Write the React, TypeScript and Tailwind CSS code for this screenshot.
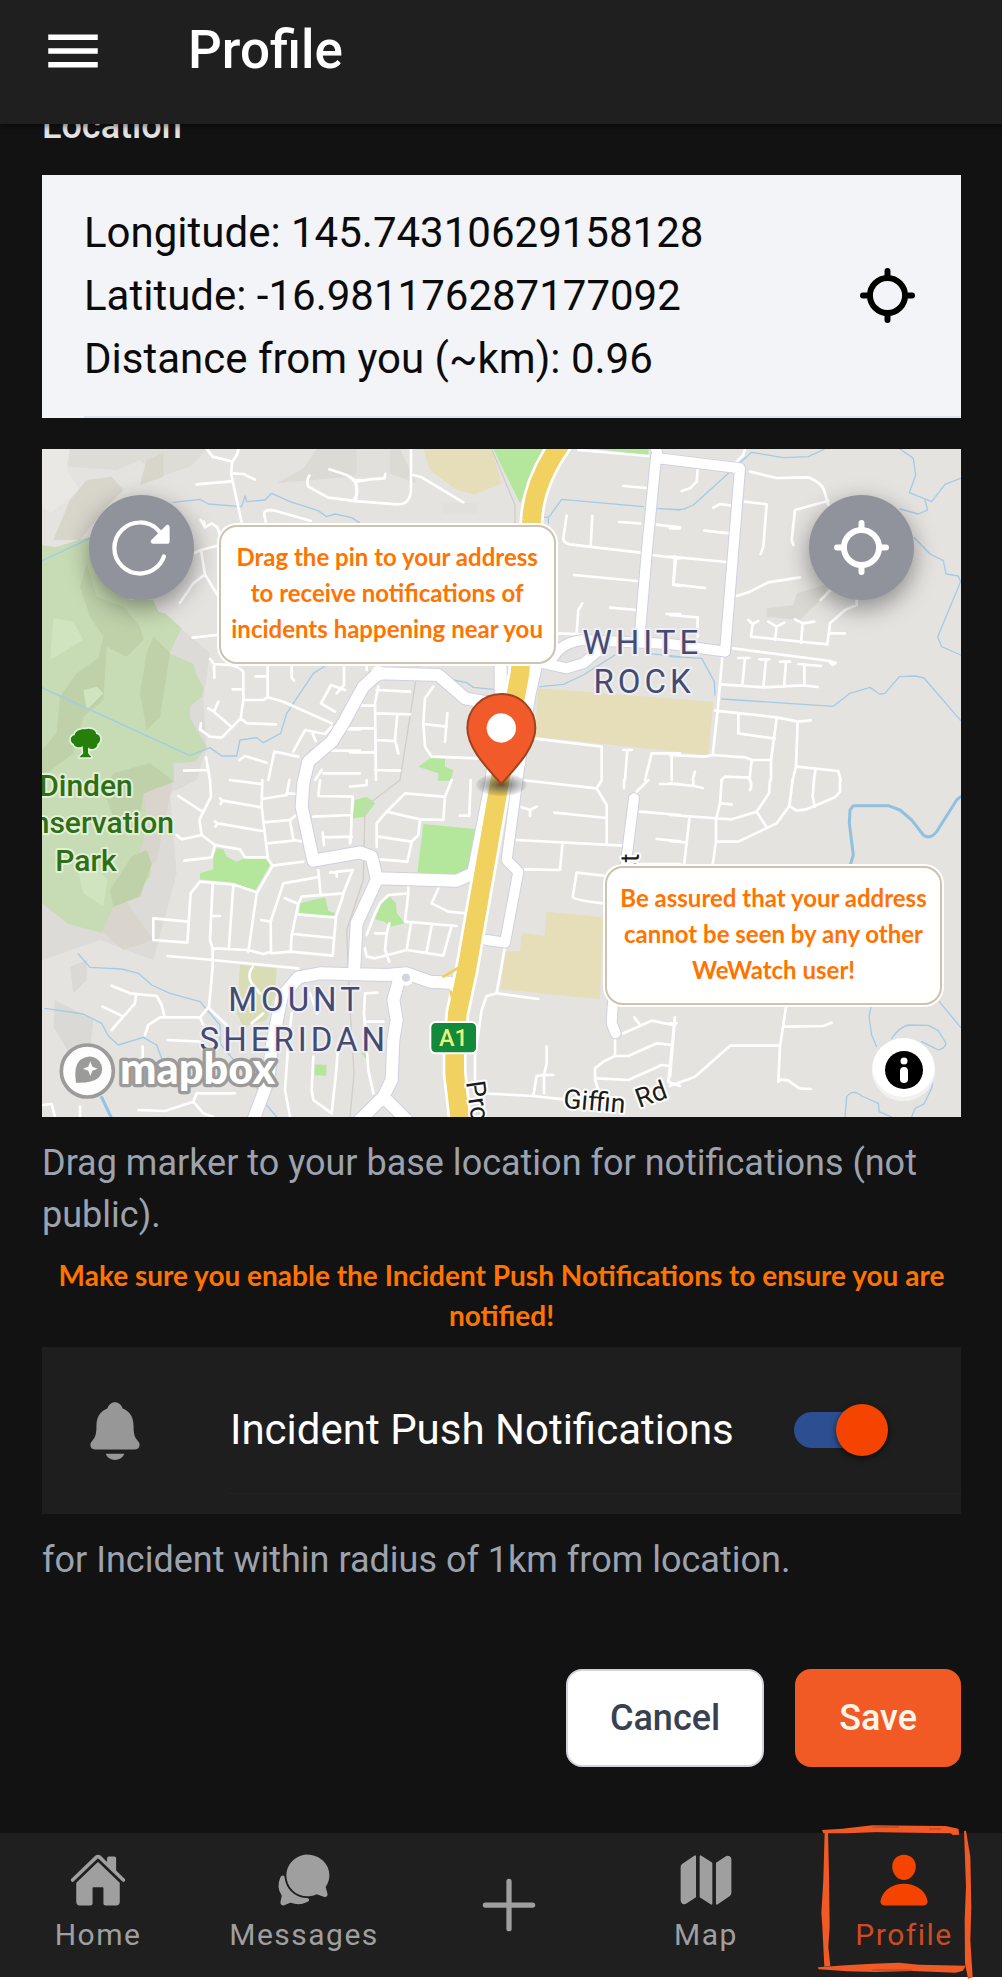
import React, { useState } from "react";
import {
  IoAdd,
  IoChatbubbles,
  IoHome,
  IoMap,
  IoNotifications,
  IoPerson,
  IoReloadOutline,
} from "react-icons/io5";
import { IoMdMenu } from "react-icons/io";

/* Map tiles: each quadrant group draws the streets of one part of the suburb. */

const minor = [
  {
    at: "translate(0 0)",
    d: "M530 27L548 50L607 65M625 27L622 42L607 65L603 100L635 248M603 100L640 102L675 119M500 133L603 124M898 88L950 105L975 122L990 120M838 107Q828 120 835 140L895 173L990 185M975 122L982 150L978 180M843 243L735 212Q700 206 703 225L708 248M512 240L525 262L545 250L562 262L570 285M525 262L522 245M495 338L513 330L570 315M513 330L525 403L562 465M525 403L490 430L450 488M488 593L560 585M540 657L552 672L600 675Q640 685 640 700V780L632 835L575 893L540 890L510 868L513 850M552 672L553 713M608 748H640M640 780H700L713 772L760 785L905 850M713 672V772M677 709H713M785 672V712L792 722M632 835L650 850L738 853M535 805L552 815L605 862M552 815L565 785M942 672V735L920 760M945 750L903 735L873 790L915 815M790 935L825 870L885 882L905 860M848 882L857 903M905 932H990M880 1000H990M930 868H990M628 960L645 948L710 968M715 1020L733 935L805 950M462 992L535 990M528 952L540 1020M855 1020L875 990",
  },
  {
    at: "translate(960 0)",
    d: "M183 27V150Q180 195 140 193L0 182M18 130L0 110M20 125L60 118L103 115L106 102M18 130L20 165L10 182M190 105L215 112L340 187M685 30L895 48M820 138L890 144M650 227L640 295Q640 310 660 313L890 340M727 228L722 320M807 246L870 250M920 254L990 262M672 405L860 423M905 345L990 355M978 355L970 435L990 438M780 503L860 510M950 522H990M697 490L685 510L680 578M620 580L700 583M20 797H75M85 740L75 790L78 1020M80 750L180 755M0 865H75M78 820L180 823M142 823L135 900L145 940M78 900L135 903M0 937H75M75 990L150 992M250 740L225 775L220 850L225 920L245 950L385 955M222 852L290 860M292 820L285 905M550 895L755 920V1020M820 930H845M832 930L825 1020M885 1020L905 940H990M50 690V672",
  },
  {
    at: "translate(1920 0)",
    d: "M225 27L220 45L200 65M83 90L80 125L60 145L35 153M240 95L320 114L415 112Q460 130 465 160L475 195M130 203L150 192L185 197M225 185L290 193L280 320L272 342M475 182L375 210L365 300L370 315M0 265H30M103 272L180 280M0 350L170 366M15 350L10 433L105 444M200 468L240 455L295 427L390 412M0 525L83 532V590M452 480L480 452M235 540L248 552L265 543M248 552L243 590L472 613L480 550L525 510L560 495V480M480 580H525M295 545L320 560L343 548M320 560L315 600M375 538L398 550L433 545M398 550L393 608M190 625L480 663L497 668L488 675L478 665M205 654H238M225 654L217 735M268 658H298M288 660L280 740M330 665H360M348 667L342 740M385 672L453 678M403 674V735M155 733L280 742L400 736L443 741M157 650L143 810L128 945M135 812L320 832L385 845L422 841M205 825V880L315 896M320 835L303 960V1020M383 845L378 980L368 1020M0 945L105 950L128 945L225 952L245 960L300 960M245 960L238 1020M380 980L505 993L512 1020M436 990L432 1020M5 945V1020M75 995L68 1020M155 1020L165 1010L240 1013",
  },
  {
    at: "translate(0 1020)",
    d: "M540 0L543 50L508 120L515 165L555 195L630 208L645 232L710 232L728 257L820 245M445 48L517 95M440 165L455 178L515 165M570 55L578 62L693 82M578 62L572 72M555 125L562 130L697 153M562 130L556 140M697 0L695 80L713 230M600 0L695 12M695 57L770 45L778 0M770 40L800 42M700 127L780 120L800 105M780 120L790 180L820 185M713 190L790 182M728 257L680 340L655 515M463 242L545 232L555 195M510 305L610 313L675 335M510 305L482 340L472 488L370 480V415L475 425M548 310L540 480L548 505L655 510L700 522L723 515L722 425M610 315L597 500M545 408H570M693 420L722 425L760 310L860 292M765 355L805 372M865 270L872 345M805 372L815 350L940 340L968 270L900 278M920 290V275M805 372L785 465L782 515L723 520M782 515L908 527L918 410L940 345M805 403L915 412M790 462L910 474M413 528L548 540L805 565M548 505V560L537 680L510 712L390 712L355 735L345 765M245 617L300 640L380 648L395 675L403 708M218 680L280 710L245 750M280 710L315 670L318 645M413 780L510 785M510 712L520 735M537 685L590 735M668 560Q650 585 665 610L690 640M700 700L665 730M850 110L965 105L968 50L865 48L870 0M878 158L882 195M885 172L965 170M965 105L962 185M338 800V840M325 990L405 993L490 965L500 940L615 940M490 965L520 1000L550 1011M36 975L65 972L75 1011M150 980V1011M785 700L775 790L765 930L780 1011M840 640L862 700M925 790L918 880L905 1000L850 960L845 930L850 830",
  },
  {
    at: "translate(960 1020)",
    d: "M0 20L50 15V0M280 50L165 40L110 95L80 130V200M110 95L210 118L280 120L285 50L305 0M210 118L205 165L185 185L85 170M185 185L172 245L90 238M330 107H358L362 0M515 82L540 90L560 80M540 90V108M613 98L770 114M515 0L740 25L770 75V190M740 25L755 0M500 180L820 197M637 195L630 270L520 268M760 287L680 278L668 350Q670 360 760 370M822 0V25M860 35L895 0M870 95L990 105M920 177L990 184M930 12H990M862 252H990M50 465L75 400L90 370L115 345L175 340V322M175 340L165 425L320 438M75 460H110L118 430M110 460L105 510L118 545M45 505L50 530L75 535L170 510L183 430M170 510L280 527L305 437M245 435L230 515M265 325L245 370L295 395L350 400M465 500L440 640L565 657M440 640L410 648L395 690L375 830V900L400 940L550 948L640 958M590 800V850L582 885H610M550 948L560 888L582 885V940M82 638L45 640L42 700L55 870L70 940M45 725H100M795 780V825M820 760L905 722L970 735M853 712L870 735M735 865L760 845L795 828L835 828L920 790L965 795M735 865V900L745 930M740 895L835 900L935 855L960 858M975 712L955 905L990 918M0 190V170",
  },
  {
    at: "translate(1920 1020)",
    d: "M0 10L72 18L98 24M70 0V18M155 0L150 70L185 73M240 0Q248 15 240 30M300 0L297 40L260 95L185 118L0 105M260 95L290 142M150 70L138 118V185L127 260M58 118L42 258M0 183L45 187M368 0L358 78L320 130L205 185H138M358 78L380 92L410 88L495 52L510 35V0M432 0L428 50L434 80M348 680L330 800L325 905L335 898L355 902L388 925L423 927M345 740L460 738L485 728M330 797H180L75 890L0 918M0 730H20M15 712L0 890",
  },
];

const water = [
  {
    at: "translate(0 0)",
    d: "M430 187L510 178L535 192L635 200L645 168L650 185L705 180L725 160L780 185L865 212L890 230L915 222L965 233L988 248M36 362L180 295M36 743L480 947L540 923L575 948L620 948L630 900L680 893L700 908L752 880L770 820L850 700L890 675",
  },
  {
    at: "translate(960 0)",
    d: "M580 233L598 230L635 178L880 200M920 205L990 210M595 235V250M310 720L350 728L370 742L430 748M570 740L640 733L700 705L795 645M890 640L990 650",
  },
  {
    at: "translate(1920 0)",
    d: "M0 208H40L70 195L245 37L340 53L415 50L462 28M690 27L730 55L737 105L718 158L785 185L825 133L872 115M765 180L773 210L745 222L690 207M733 293L780 342L820 362L828 402L865 408L872 425L803 590L815 620L872 645M0 650L95 655L133 725L135 765M155 777L490 799L540 760L600 742L628 762L645 760L688 710L735 708L762 714L872 842",
  },
  {
    at: "translate(0 1020)",
    d: "M145 522L180 562L275 567L325 580L365 615L420 640L510 665L570 735V790L690 935M45 685L160 702L215 730L235 768L265 795L340 772L380 795L400 850M710 975L740 1011",
  },
  {
    at: "translate(1920 1020)",
    d: "M808 665L872 742M603 680L597 710L605 765L620 800M665 775Q690 740 715 735L775 736L805 752L828 790Q825 805 805 810L755 785M525 1011L530 950Q550 925 575 948L625 970L627 995L665 1011M785 905L787 920L762 972L735 985L725 1011",
  },
];

const major =
  "M1390 790L1305 775L1225 705L1045 700L1000 740L940 850L905 905L835 965L820 1030L815 1100L850 1262L990 1237L1025 1250L1040 1315L1280 1322L1330 1300L1385 1020L1412 780L1412 640" +
  "M1040 1320L980 1450L972 1600M670 2040L715 1920L725 1820L755 1670L805 1612L870 1600L1070 1605L1130 1600L1200 1625L1290 1630M1110 1610L1090 1680L1100 1740L1090 1800L1085 1920L1060 1970L990 2040M1060 1970L1130 2040";
const majorEast =
  "M1878 27L1885 55L2130 85L2085 635L1920 612L1660 600Q1600 605 1570 650M1500 660L1610 685L1660 670L1720 620M1878 50L1850 340L1828 600M1520 680L1500 770L1462 1020L1430 1260L1465 1295L1425 1508L1370 1500M1812 1075L1790 1250L1748 1700L1745 1750L1757 1780";
const highway = "M1590 15Q1510 130 1505 240L1470 700L1410 1020L1310 1590L1282 1720L1274 1840V1900L1290 2040";

function MapView() {
  return (
    <svg
      viewBox="36 27 2757 2004"
      className="block h-auto w-full"
      role="img"
      aria-label="Map of White Rock and Mount Sheridan"
      fill="none"
      strokeLinecap="round"
      strokeLinejoin="round"
    >
      <defs>
        <radialGradient id="marker-shadow">
          <stop offset="0" stopColor="#2b2b2b" stopOpacity="0.75" />
          <stop offset="0.55" stopColor="#3d3d3d" stopOpacity="0.4" />
          <stop offset="1" stopColor="#3d3d3d" stopOpacity="0.08" />
        </radialGradient>
      </defs>
      <rect x="36" y="27" width="2757" height="2004" fill="#e4e3e0" />
      {/* hill shading */}
      <path d="M36 27H530L480 80L390 110L330 60L260 90L120 80Z" fill="#dddcd7" />
      <path d="M36 27H120L110 90L150 150L60 220L36 200Z" fill="#e9e8e5" />
      <path d="M170 120L245 110L280 150L230 200L150 300H70L120 180Z M350 60L400 40V110L330 135Z" fill="#d8d5cb" />
      <path d="M860 27H1110L1160 130L1050 90L960 110L740 130L820 85Z" fill="#dbdad5" />
      <path d="M980 27H1080V110H980Z M1240 190H1340V220H1240Z" fill="#e1e0dc" />
      <path d="M400 520L540 640L520 780L530 920L500 1020L420 1060L440 1300L370 1560L210 1500L36 1560V1340L380 1200L350 600Z" fill="#dddbd8" />
      <path d="M280 1370L380 1260L430 1020L330 1040L290 1300L210 1470L280 1530L370 1500Z" fill="#d9d4cc" />
      <path d="M75 1680L190 1740L180 1830L130 1860L70 1760Z M120 1580L170 1560V1620L130 1660Z" fill="#dad9d5" />
      <path d="M2210 530V505L2290 495L2300 460L2400 430L2380 470L2310 540Z" fill="#d9d8d2" />
      {/* conservation park */}
      <path
        d="M36 315L75 322L180 290L300 480H370L385 515L405 520L455 565L418 640L490 672L500 705L520 745L515 770L480 800L480 835L530 920L495 965L430 970L432 1025L340 1060L350 1150L330 1240L365 1270L360 1310L305 1375L250 1400L215 1478L115 1453L36 1390Z"
        fill="#c7dbb4"
      />
      <path
        d="M170 370L200 470L280 500L330 560L340 600L290 650L230 620L220 780L160 830L130 940L36 1010V930L80 880L90 770L140 700L205 655L220 590L180 530L150 440Z M370 590L420 640L390 830L350 870L330 760L350 640Z M340 1060L432 1025L360 970L250 1000L220 1050L250 1130L300 1180L330 1130Z M305 1250L350 1230L365 1270L330 1370L250 1400L240 1350Z"
        fill="#bed1a9"
      />
      <path d="M70 535L130 545L160 600L60 660Z M145 1300L200 1280L232 1320L220 1400L160 1360Z M160 750L200 740L220 760L170 810Z" fill="#cfe4bf" />
      {/* parks and schools */}
      <g fill="#b4e69b">
        <path d="M1390 27H1550L1470 190Z M1700 27H1855V46Z" />
        <path d="M1165 980L1200 955H1245V980L1270 990L1262 1022H1225V1000Z" />
        <path d="M510 1300L550 1288V1250L560 1225L580 1228L590 1250L620 1265L650 1252L712 1252L720 1275L675 1352L610 1328L510 1318Z" />
        <path d="M810 1390L885 1372L895 1412L915 1420L910 1432L808 1422Z M855 1873L890 1875L888 1908L853 1905Z" />
        <path d="M975 1080L1010 1070L1035 1090L1005 1130L968 1135Z" />
        <path d="M1180 1152L1342 1168L1330 1270L1305 1310L1162 1298Z" />
        <path d="M1035 1438L1055 1385L1080 1370L1098 1390L1100 1420L1125 1450L1080 1460L1065 1445Z M995 1840L1010 1815L1015 1865Z" />
      </g>
      <path d="M1180 27H1385L1415 130L1335 163L1280 150L1200 90Z" fill="#e6deb9" />
      <path d="M1525 745L2050 785L2035 945L1515 890Z" fill="#e6deb9" />
      <path d="M1550 1415L1720 1432L1710 1678L1412 1648L1425 1535L1470 1532L1475 1480L1543 1487Z" fill="#e6deb9" />
      <path d="M630 1575L740 1585L735 1660L710 1740L640 1760L620 1720Z" fill="#d9ddb5" />
      {/* railway */}
      <path d="M1165 672L1110 1020L1005 1100L1000 1320L950 1470L960 1700L972 1900L960 2031M1385 27L1455 195V248" stroke="#d0cec7" strokeWidth="4" />
      {water.map((w) => (
        <path key={w.at} transform={w.at} d={w.d} stroke="#a4cbe6" strokeWidth="4" />
      ))}
      <path d="M2792 1070L2780 1080L2720 1175Q2700 1200 2680 1185L2645 1140L2610 1110L2575 1097H2470L2460 1110L2458 1150L2470 1245L2460 1278" stroke="#92c1e0" strokeWidth="9" />
      {minor.map((m) => (
        <path key={m.at} transform={m.at} d={m.d} stroke="#fff" strokeWidth="8" />
      ))}
      <path d={major} stroke="#cfd0e2" strokeWidth="42" />
      <path d={majorEast} stroke="#cfd0e2" strokeWidth="36" />
      <path d={major} stroke="#fff" strokeWidth="36" />
      <path d={majorEast} stroke="#fff" strokeWidth="30" />
      <circle cx="1045" cy="700" r="22" fill="#fff" />
      <circle cx="1128" cy="1613" r="24" fill="#fff" />
      <circle cx="1128" cy="1613" r="12" fill="#d3d4e2" />
      <path d={highway} stroke="#fff" strokeWidth="72" />
      <path d="M1240 1610L1300 1575M1262 1655L1275 1710" stroke="#efd05e" strokeWidth="8" />
      <path d={highway} stroke="#f1d160" strokeWidth="56" />
      {/* labels */}
      <g fontFamily="Roboto, sans-serif" stroke="#fff" strokeWidth="12" paintOrder="stroke" textAnchor="middle">
        <g fontSize="99" letterSpacing="12" fill="#454a72" stroke="#efeff3">
          <text x="1837" y="641">WHITE</text>
          <text x="1842" y="760">ROCK</text>
          <text x="798" y="1713">MOUNT</text>
          <text x="793" y="1832">SHERIDAN</text>
        </g>
        <g fontSize="90" fontWeight="500" fill="#2c7012" stroke="#e3eedb">
          <text x="168" y="1068">Dinden</text>
          <text x="432" y="1180" textAnchor="end">Conservation</text>
          <text x="168" y="1293">Park</text>
        </g>
        <g fontSize="80" fill="#1c1c1c" textAnchor="start">
          <text transform="translate(1826 1308) rotate(-90)">st</text>
          <text transform="translate(1308 1926) rotate(82)">Pro</text>
          <text transform="translate(1598 2003) rotate(5)">Giffin</text>
          <text transform="translate(1828 2004) rotate(-20)">Rd</text>
        </g>
      </g>
      <g fill="#24800a" stroke="#e3f2da" strokeWidth="10" paintOrder="stroke">
        <path d="M165 868C185 862 200 874 198 882C214 884 214 906 202 912C204 926 180 932 174 922L174 940L184 952H148L160 940L158 918C150 926 130 920 132 912C118 908 120 886 134 886C134 874 152 866 165 868Z" />
      </g>
      <rect x="1201" y="1746" width="140" height="94" rx="16" fill="#13893a" stroke="#fff" strokeWidth="6" />
      <text x="1270" y="1818" fontFamily="Roboto, sans-serif" fontWeight="500" fontSize="70" fill="#ecf37c" textAnchor="middle">A1</text>
      {/* provider mark */}
      <circle cx="172" cy="1893" r="78" fill="#fff" fillOpacity="0.92" stroke="#9b9b99" strokeWidth="11" />
      <path d="M138 1928Q130 1880 150 1860Q180 1838 207 1862Q228 1888 205 1914Q185 1930 138 1928Z" fill="#9b9b99" />
      <path d="M181 1864L187 1880L203 1886L187 1892L181 1908L175 1892L159 1886L175 1880Z" fill="#fff" />
      <path d="M215 1972L243 2031" stroke="#8ec4ea" strokeWidth="9" />
      <text x="270" y="1932" fontFamily="Lato, sans-serif" fontWeight="900" fontSize="130" fill="#fff" stroke="#9b9b99" strokeWidth="20" paintOrder="stroke">mapbox</text>
      {/* marker */}
      <ellipse cx="1414" cy="1034" rx="76" ry="34" fill="url(#marker-shadow)" />
      <path d="M1414 762C1471 762 1516 807 1516 864C1516 925 1455 985 1414 1032C1373 985 1312 925 1312 864C1312 807 1357 762 1414 762Z" fill="#f15a29" stroke="#a1431f" strokeWidth="6" />
      <circle cx="1414" cy="864" r="44" fill="#fff" />
    </svg>
  );
}

function Crosshair() {
  return (
    <svg viewBox="0 0 166 166" className="size-[55px]" fill="none" stroke="currentColor" strokeWidth="18" strokeLinecap="round" aria-hidden="true">
      <circle cx="83" cy="83" r="53" />
      <path d="M83 9V28M83 138V157M9 83H28M138 83H157" />
    </svg>
  );
}

function Callout({ className, children }: { className: string; children: React.ReactNode }) {
  return (
    <div className={`absolute w-[341px] rounded-[20px] bg-white p-[2px] ${className}`}>
      <p className="rounded-[18px] border-2 border-[#cfc2ae] pt-3 pb-[15px] text-center font-[Lato] text-[24px] leading-9 font-bold text-[#ff7400]">
        {children}
      </p>
    </div>
  );
}

function Scribble() {
  return (
    <svg
      viewBox="957 555 465 462"
      className="pointer-events-none absolute -top-2 right-[29px] h-[154px] w-[155px]"
      fill="#f15a24"
      aria-hidden="true"
    >
      <path d="M969 570L1030 566L1120 556L1250 557L1340 558L1378 566L1381 584L1362 585L1355 580L1240 578L1130 577L1040 580H973Z" />
      <path d="M977 575L987 574L990 700L992 860L988 920L994 978L976 980L970 860L967 820L973 720Z" />
      <path d="M1395 573L1401 572L1414 650L1417 800L1414 900L1421 1012L1407 1016L1398 970L1397 840L1401 740Z" />
      <path d="M955 982L1040 976L1120 971L1200 968L1260 974L1400 977L1392 992L1370 998L1240 993L1130 996L1045 994L960 988Z" />
      <path d="M1120 561H1200M1290 567H1325M1120 990H1240" stroke="#8c3a20" strokeWidth="2" fill="none" />
    </svg>
  );
}

const tabs = [
  { label: "Home", Icon: IoHome },
  { label: "Messages", Icon: IoChatbubbles },
  { label: "", Icon: IoAdd },
  { label: "Map", Icon: IoMap },
  { label: "Profile", Icon: IoPerson },
];

export default function App() {
  const [push, setPush] = useState(true);
  return (
    <div className="min-h-screen bg-white pr-[3px] pb-[3px] font-[Roboto,sans-serif]">
      <div className="flex min-h-[1977px] flex-col overflow-x-clip bg-[#121212]">
        <header className="relative z-10 flex h-[124px] items-start gap-[82px] bg-[#1f1f1f] px-10 pt-[18px] shadow-[0_2px_6px_rgba(0,0,0,0.5)]">
          <button type="button" aria-label="Menu" className="text-white">
            <IoMdMenu size={66} />
          </button>
          <h1 className="text-[53px] leading-[64px] font-medium text-white">Profile</h1>
        </header>

        <main className="flex grow flex-col pr-[41px] pl-[42px]">
          <h2 className="-mt-[18px] text-[36px] leading-10 font-medium text-[#e4e4e4]">Location</h2>

          <section className="mt-[29px] bg-[#f3f4f8] pl-[42px]">
            <div className="flex items-center border-b-2 border-[#dfe3ea] pr-[46px]">
              <div className="grow pt-[26px] pb-[26px] text-[42px] leading-[63px] text-[#0b0b0b]">
                <p>Longitude: 145.74310629158128</p>
                <p>Latitude: -16.981176287177092</p>
                <p>Distance from you (~km): 0.96</p>
              </div>
              <button type="button" aria-label="Use my location" className="text-black">
                <Crosshair />
              </button>
            </div>
          </section>

          <section className="relative mt-[31px] overflow-hidden">
            <MapView />
            <button
              type="button"
              aria-label="Reset location"
              className="absolute top-[46px] left-[47px] flex size-[105px] items-center justify-center rounded-full bg-[#90939b] text-white shadow-[0_8px_24px_rgba(0,0,0,0.4)]"
            >
              <IoReloadOutline size={68} />
            </button>
            <button
              type="button"
              aria-label="Centre map"
              className="absolute top-[46px] right-[47px] flex size-[105px] items-center justify-center rounded-full bg-[#90939b] text-white shadow-[0_8px_24px_rgba(0,0,0,0.4)]"
            >
              <Crosshair />
            </button>
            <Callout className="top-[74px] left-[19%]">
              Drag the pin to your address
              <br />
              to receive notifications of
              <br />
              incidents happening near you
            </Callout>
            <Callout className="right-[17px] bottom-[110px]">
              Be assured that your address
              <br />
              cannot be seen by any other
              <br />
              WeWatch user!
            </Callout>
            <button
              type="button"
              aria-label="Map information"
              className="absolute right-[26px] bottom-4 flex size-[63px] items-center justify-center rounded-full bg-white shadow-[inset_0_-4px_0_#f1f1f1]"
            >
              <svg viewBox="0 0 38 38" className="size-[38px]" aria-hidden="true">
                <circle cx="19" cy="19" r="19" fill="#000" />
                <circle cx="19" cy="10" r="3.5" fill="#fff" />
                <rect x="15" y="16" width="8" height="16" rx="4" fill="#fff" />
              </svg>
            </button>
          </section>

          <p className="mt-5 text-[36px] leading-[52px] text-[#9ca3af]">
            Drag marker to your base location for notifications (not public).
          </p>

          <p className="mt-3.5 px-4 text-center font-[Lato] text-[28px] leading-10 font-bold text-[#ff7400]">
            Make sure you enable the Incident Push Notifications to ensure you are notified!
          </p>

          <section className="mt-3 bg-[#1e1e1e] pb-5">
            <div className="flex h-[147px] items-center pl-10">
              <IoNotifications size={66} className="mt-5 shrink-0 text-[#979797]" aria-hidden="true" />
              <div className="ml-[82px] flex h-full grow items-center justify-between border-b border-[#242424] pt-5 pr-[73px]">
                <label htmlFor="push" className="text-[42px] leading-[52px] text-white">
                  Incident Push Notifications
                </label>
                <span className="relative flex h-[52px] w-[94px] items-center">
                  <input
                    id="push"
                    type="checkbox"
                    role="switch"
                    checked={push}
                    onChange={(e) => setPush(e.target.checked)}
                    className="peer absolute inset-0 z-10 size-full cursor-pointer opacity-0"
                  />
                  <span className="h-9 w-[84px] rounded-full bg-[#5a5a5a] peer-checked:bg-[#2b4f91]" />
                  <span className="absolute left-0 size-[52px] rounded-full bg-[#b0b0b0] shadow-[0_2px_6px_rgba(0,0,0,0.6)] peer-checked:right-0 peer-checked:left-auto peer-checked:bg-[#f44400]" />
                </span>
              </div>
            </div>
          </section>

          <p className="mt-5 text-[36px] leading-[52px] text-[#9ca3af]">
            for Incident within radius of 1km from location.
          </p>

          <div className="mt-[83px] mb-16 flex justify-end gap-[31px]">
            <button
              type="button"
              className="h-[98px] rounded-2xl border-2 border-[#d1d5db] bg-white px-[42px] text-[36px] leading-[52px] font-medium text-[#374151]"
            >
              Cancel
            </button>
            <button
              type="button"
              className="h-[98px] rounded-2xl bg-[#f15a24] px-11 text-[36px] leading-[52px] font-medium text-[#fff5e8]"
            >
              Save
            </button>
          </div>
        </main>

        <nav className="grid h-[144px] grid-cols-[196fr_216fr_194fr_200fr_196fr] bg-[#1f1f1f]">
          {tabs.map(({ label, Icon }) => {
            const active = label === "Profile";
            return (
              <a
                key={label || "Add"}
                href="#"
                aria-label={label || "Add"}
                aria-current={active ? "page" : undefined}
                className={
                  active
                    ? "relative flex flex-col items-center pt-[18px] text-[#f44400]"
                    : label
                      ? "flex flex-col items-center pt-[18px] text-[#9f9f9f]"
                      : "flex flex-col items-center justify-center text-[#9f9f9f]"
                }
              >
                <Icon size={label ? 58 : 84} />
                {label && (
                  <span
                    className={
                      active
                        ? "mt-2 text-[30px] leading-9 tracking-wider text-[#cf4a22]"
                        : "mt-2 text-[30px] leading-9 tracking-wider"
                    }
                  >
                    {label}
                  </span>
                )}
                {active && <Scribble />}
              </a>
            );
          })}
        </nav>
      </div>
    </div>
  );
}
